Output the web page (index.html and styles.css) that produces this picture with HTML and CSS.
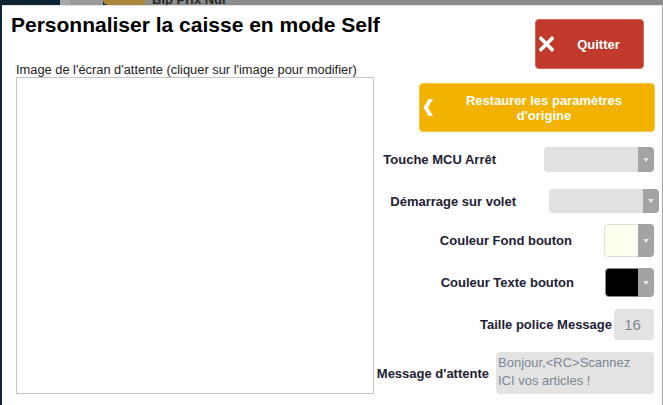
FILE: index.html
```html
<!DOCTYPE html>
<html lang="fr">
<head>
<meta charset="utf-8">
<title>Personnaliser la caisse en mode Self</title>
<link rel="stylesheet" href="styles.css">
</head>
<body>
<div class="topbar">
  <span class="seg seg-navy"></span>
  <span class="seg seg-light"></span>
  <span class="seg seg-mid"></span>
  <span class="seg seg-gold"></span>
  <span class="seg seg-rest"><span class="app-title">Bip Prix Nul</span></span>
</div>
<div class="dialog">
  <div class="left">
    <h1 class="title">Personnaliser la caisse en mode Self</h1>
    <div class="img-label">Image de l'écran d'attente (cliquer sur l'image pour modifier)</div>
    <div class="img-box"></div>
  </div>
  <div class="right">
    <button class="btn btn-quit" type="button">
      <svg class="icon-x" width="15" height="16" viewBox="0 0 15 16"><path d="M2 2.5 L13 13.5 M13 2.5 L2 13.5" stroke="#fff" stroke-width="3.6" stroke-linecap="square" fill="none"/></svg>
      <span class="btn-text">Quitter</span>
    </button>
    <button class="btn btn-restore" type="button">
      <svg class="icon-chev" width="11" height="17" viewBox="0 0 11 17"><polygon points="10,0 5.5,0 0.5,8.5 5.5,17 10,17 5,8.5" fill="#fff"/></svg>
      <span class="btn-text">Restaurer les paramètres<br>d'origine</span>
    </button>
    <div class="row row-mcu">
      <span class="row-label">Touche MCU Arrêt</span>
      <div class="select select-mcu"><span class="select-value"></span><span class="select-arrow"><i class="tri"></i></span></div>
    </div>
    <div class="row row-volet">
      <span class="row-label">Démarrage sur volet</span>
      <div class="select select-volet"><span class="select-value"></span><span class="select-arrow"><i class="tri"></i></span></div>
    </div>
    <div class="row row-fond">
      <span class="row-label">Couleur Fond bouton</span>
      <div class="color color-fond"><span class="swatch swatch-ivory"></span><span class="select-arrow"><i class="tri"></i></span></div>
    </div>
    <div class="row row-texte">
      <span class="row-label">Couleur Texte bouton</span>
      <div class="color color-texte"><span class="swatch swatch-black"></span><span class="select-arrow"><i class="tri"></i></span></div>
    </div>
    <div class="row row-taille">
      <span class="row-label">Taille police Message</span>
      <div class="field field-num">16</div>
    </div>
    <div class="row row-msg">
      <span class="row-label">Message d'attente</span>
      <div class="field field-area">Bonjour,&lt;RC&gt;Scannez<br>ICI vos articles !</div>
    </div>
  </div>
</div>
</body>
</html>
```
FILE: styles.css
```css
html, body {
  margin: 0;
  padding: 0;
}
body {
  background: #0f2433;
  font-family: "Liberation Sans", Arial, sans-serif;
  width: 663px;
  height: 405px;
  overflow: hidden;
}
.topbar {
  display: flex;
  height: 5px;
  overflow: hidden;
}
.seg { display: block; height: 5px; }
.seg-navy { width: 60px; background: #0f2433; }
.seg-light { width: 10px; background: #a9a9a9; }
.seg-mid { width: 33px; background: #9a9a9a; }
.seg-gold { width: 42px; background: #a8863a; border-bottom-left-radius: 8px; }
.seg-rest { flex: 1; background: #8b8b8b; position: relative; overflow: hidden; }
.app-title {
  display: block;
  margin: -7px 0 0 7px;
  font-size: 13px;
  line-height: 14px;
  font-weight: bold;
  color: #2a2a2a;
  white-space: nowrap;
}
.dialog {
  display: flex;
  margin-left: 2px;
  width: 660px;
  height: 399px;
  background: #fff;
  border-top: 1px solid #e2e2e2;
  border-right: 1px solid #a4a4a4;
}
.left {
  width: 374px;
  flex: none;
}
.title {
  margin: 7px 0 0 9px;
  font-size: 21px;
  line-height: 24px;
  font-weight: bold;
  color: #000;
  white-space: nowrap;
}
.img-label {
  margin: 26px 0 0 14px;
  font-size: 12.85px;
  line-height: 14px;
  color: #222;
  white-space: nowrap;
}
.img-box {
  margin-left: 14px;
  width: 358px;
  height: 317px;
  box-sizing: border-box;
  border: 1px solid #c6c6c6;
  background: #fff;
}
.right {
  flex: 1;
  display: flex;
  flex-direction: column;
  align-items: flex-end;
}
.btn {
  display: flex;
  align-items: center;
  padding: 0 0 0 3px;
  box-sizing: border-box;
  border-radius: 4px;
  font-family: "Liberation Sans", Arial, sans-serif;
  font-size: 13px;
  line-height: 15px;
  font-weight: bold;
  color: #fff;
  cursor: pointer;
}
.btn svg { flex: none; display: block; }
.btn-text { flex: 1; text-align: center; }
.btn-quit {
  margin: 13px 18px 0 0;
  width: 109px;
  height: 50px;
  background: #c0392b;
  border: 1px solid #d4685d;
}
.btn-restore {
  margin: 14px 7px 0 0;
  width: 236px;
  height: 49px;
  background: #f3b200;
  border: 1px solid #f6c74a;
}
.row {
  display: flex;
  align-items: center;
  margin-right: 8px;
}
.row-label {
  font-size: 13px;
  line-height: 15px;
  font-weight: bold;
  color: #1d2133;
  white-space: nowrap;
}
.row-mcu { margin-top: 15px; gap: 48px; }
.row-volet { margin-top: 17px; gap: 33px; margin-right: 3px; }
.row-fond { margin-top: 11px; gap: 32px; }
.row-texte { margin-top: 11px; gap: 31px; }
.row-taille { margin-top: 12px; gap: 2px; }
.row-msg { margin-top: 12px; gap: 7px; }
.select, .color {
  display: flex;
  border-radius: 4px;
  overflow: hidden;
}
.select-mcu { width: 110px; height: 25px; }
.select-volet { width: 110px; height: 24px; }
.select-value { flex: 1; background: #e1e1e1; }
.select-arrow {
  width: 16px;
  flex: none;
  background: #a3a3a3;
  display: flex;
  align-items: center;
  justify-content: center;
}
.tri {
  display: block;
  width: 0;
  height: 0;
  border-left: 3px solid transparent;
  border-right: 3px solid transparent;
  border-top: 4px solid #e4e4e4;
}
.color-fond { width: 50px; height: 33px; }
.color-texte { width: 49px; height: 29px; }
.swatch {
  flex: 1;
  box-sizing: border-box;
  border-radius: 4px 0 0 4px;
}
.swatch-ivory { background: #fffff0; border: 1px solid #dedede; border-right: 0; }
.swatch-black { background: #000; border: 1px solid #8a8a8a; border-right: 0; }
.field {
  background: #e3e3e3;
  border-radius: 4px;
  color: #7b8794;
  box-sizing: border-box;
}
.field-num {
  width: 40px;
  height: 31px;
  font-size: 15px;
  line-height: 31px;
  text-align: center;
  padding-right: 3px;
}
.field-area {
  width: 158px;
  height: 42px;
  padding: 2px 2px;
  font-size: 13px;
  line-height: 17.5px;
  white-space: nowrap;
}
```
